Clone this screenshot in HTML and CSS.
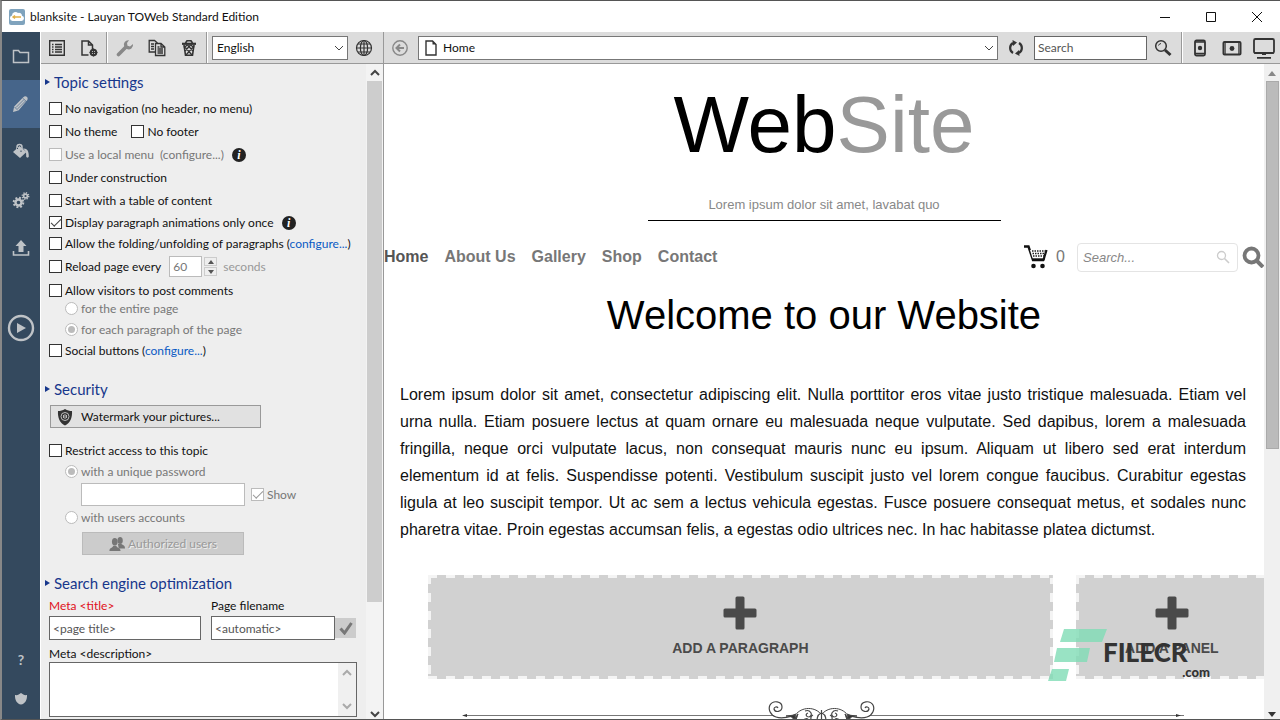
FILE: index.html
```html
<!DOCTYPE html>
<html lang="en">
<head>
  <meta charset="UTF-8">
  <title>blanksite - Lauyan TOWeb Standard Edition</title>
  <meta name="viewport" content="width=device-width, initial-scale=1.0">
  <link rel="stylesheet" href="styles.css">
</head>
<body>

<div class="window">
  <header class="titlebar">
    <svg class="app-icon" viewBox="0 0 16 16">
      <rect width="16" height="16" rx="2" fill="#7fa3bd"/>
      <path d="M3.500 12a2.800 2.800 0 0 1-.5-5.500A3.500 3.500 0 0 1 9 4a3 3 0 0 1 4 2.700A2.700 2.700 0 0 1 12.500 12z" fill="#fff"/>
      <path d="M4 8h8M6 6.500 4 8l2 1.500" stroke="#e0b04a" stroke-width="1.400" fill="none"/>
    </svg>
    <h1 class="title">blanksite - Lauyan TOWeb Standard Edition</h1>
    <button class="win-btn" aria-label="Minimize"><svg viewBox="0 0 12 12"><path d="M1 6.500h10"/></svg></button>
    <button class="win-btn" aria-label="Maximize"><svg viewBox="0 0 12 12"><path d="M1.500 1.500h9v9h-9z"/></svg></button>
    <button class="win-btn" aria-label="Close"><svg viewBox="0 0 12 12"><path d="M1 1l10 10M11 1 1 11"/></svg></button>
  </header>

  <div class="main">
    <nav class="rail">
      <button aria-label="Files"><svg viewBox="0 0 18 18"><path d="M1.500 15.500v-12h5l1.500 2h8.500v10z" fill="none" stroke="currentColor" stroke-width="1.500"/></svg></button>
      <button class="active" aria-label="Edit"><svg viewBox="0 0 18 18"><path d="M1 17l1.200-5.500L11 2.500c1.500-1.500 3-1.500 4-.5s1 2.500-.5 4L6.500 15.500z" fill="currentColor"/><path d="M4 12.500l8-8M5.500 14l8-8M2.500 12l3.500 3.500M10.500 3l4.500 4" stroke="#46658a" stroke-width=".7" fill="none"/></svg></button>
      <button aria-label="Theme"><svg viewBox="0 0 18 18"><path d="M1 9l6.500-6 7 6-6.500 6z" fill="currentColor"/><path d="M5 7V4a2.500 2.500 0 0 1 5 0v4" fill="none" stroke="currentColor" stroke-width="1.500"/><path d="M5.500 6V5M9 7.500v1.500" stroke="#34495e"/><path d="M11 5.500c4-.5 6 2.500 5.800 8-.2 1.500-2.400 1.500-2.600 0 0-3 .3-5-3.200-8z" fill="currentColor"/></svg></button>
      <button aria-label="Options"><svg viewBox="0 0 18 18" fill="none" stroke="currentColor"><circle cx="6.500" cy="11.500" r="3" stroke-width="2.400"/><circle cx="6.500" cy="11.500" r="4.800" stroke-width="2" stroke-dasharray="1.900 1.870"/><circle cx="13.500" cy="5" r="1.900" stroke-width="1.600"/><circle cx="13.500" cy="5" r="3.200" stroke-width="1.500" stroke-dasharray="1.250 1.260"/></svg></button>
      <button aria-label="Publish"><svg viewBox="0 0 18 18"><path d="M9 1l5.500 6H11.500v6h-5V7h-3z" fill="currentColor"/><path d="M1.500 12v4h15v-4" fill="none" stroke="currentColor" stroke-width="1.600"/></svg></button>
      <button class="play" aria-label="Preview"><svg viewBox="0 0 28 28"><circle cx="14" cy="14" r="12" fill="none" stroke="currentColor" stroke-width="2.400"/><path d="M10 9l9 5-9 5z" fill="currentColor"/></svg></button>
      <span class="rail-space"></span>
      <button class="small" aria-label="Help">?</button>
      <button class="small" aria-label="Shop"><svg viewBox="0 0 18 18"><path d="M3 5c2.500.5 4-.5 6-2 2 1.500 3.500 2.500 6 2 .3 5-2 9-6 9.500C5 14 2.700 10 3 5z" fill="currentColor"/></svg></button>
    </nav>

    <section class="panel">
      <div class="toolbar">
        <button class="tool" aria-label="List"><svg viewBox="0 0 18 18" fill="none" stroke="currentColor"><path d="M1.700 1.700h14.600v14.600H1.700z" stroke-width="1.400"/><path d="M4 5.500h1.500M4 8h1.500M4 10.500h1.500M4 13h1.500M7 5.500h7M7 8h7M7 10.500h7M7 13h7" stroke-width="1.300"/></svg></button>
        <button class="tool" aria-label="New page"><svg viewBox="0 0 18 18" fill="none" stroke="currentColor" stroke-width="1.500"><path d="M8.500 16H2V2h6.500l4 4v4M8.500 2v4h4"/><circle cx="13.500" cy="13.500" r="2.800" stroke-width="2"/><path d="M13.500 9.500v8M9.500 13.500h8M13.500 12.500v2" stroke-width="1.200"/></svg></button>
        <span class="sep"></span>
        <button class="tool dim" aria-label="Settings"><svg viewBox="0 0 18 18"><path d="M2.500 15.500l7-7" stroke="currentColor" stroke-width="3.600" stroke-linecap="round"/><path d="M13 1.200a4.500 4.500 0 0 0-4.800 6.300l2.500 2.500a4.500 4.500 0 0 0 6.300-5L14 7.500l-2.500-.8L11 4z" fill="currentColor"/></svg></button>
        <button class="tool" aria-label="Copy"><svg viewBox="0 0 18 18" fill="none" stroke="currentColor" stroke-width="1.300"><path d="M7 13H1.200V1.500h5.300L9.500 4"/><path d="M7.500 4.500h5.500l3.800 3.500v8.500H7.500zM13 4.500V8h3.800M3 5h3M3 7.500h3M3 10h3M9.500 10h5.500M9.500 12h5.500M9.500 14h5.500M9.500 8h2"/></svg></button>
        <button class="tool" aria-label="Delete"><svg viewBox="0 0 18 18" fill="none" stroke="currentColor"><path d="M2 4.800h14" stroke-width="2.200"/><path d="M5.500 4l1.500-2.200h4L12.500 4" stroke-width="1.600"/><path d="M4 6l1.500 10.300h7L14 6" stroke-width="1.600"/><path d="M4 7l8 9M7.500 6l5.500 6M11 6l3 3M14 7l-8 9M10.500 6l-5.500 6M7 6 4 9" stroke-width="1.300"/></svg></button>
        <span class="sep"></span>
        <div class="combo lang">
          <select aria-label="Language"><option>English</option></select>
          <svg class="chev" viewBox="0 0 10 10"><path d="M1 3l4 4 4-4"/></svg>
        </div>
        <button class="tool" aria-label="Languages"><svg viewBox="0 0 18 18" fill="none" stroke="currentColor" stroke-width="1.200"><circle cx="9" cy="9" r="7.500"/><ellipse cx="9" cy="9" rx="3.600" ry="7.500"/><path d="M9 1.500v15M1.500 9h15M3 5h12M3 13h12"/></svg></button>
      </div>

      <div class="panel-body">
        <form class="settings">
          <h2>Topic settings</h2>
          <div class="row"><label><input type="checkbox">No navigation (no header, no menu)</label></div>
          <div class="row"><label><input type="checkbox">No theme</label><label class="second"><input type="checkbox">No footer</label></div>
          <div class="row off"><label><input type="checkbox" disabled>Use a local menu</label><span class="note">(configure...)</span><span class="info">i</span></div>
          <div class="row"><label><input type="checkbox">Under construction</label></div>
          <div class="row"><label><input type="checkbox">Start with a table of content</label></div>
          <div class="row tight"><label><input type="checkbox" checked>Display paragraph animations only once</label><span class="info">i</span></div>
          <div class="row tight"><label><input type="checkbox">Allow the folding/unfolding of paragraphs</label><span class="conf">(<a href="#">configure...</a>)</span></div>
          <div class="row tall">
            <label><input type="checkbox">Reload page every</label>
            <input class="num" type="text" value="60" aria-label="Reload interval" disabled>
            <span class="spin">
              <button type="button" aria-label="Increase" disabled><svg viewBox="0 0 6 4"><path d="M0 4l3-4 3 4z"/></svg></button>
              <button type="button" aria-label="Decrease" disabled><svg viewBox="0 0 6 4"><path d="M0 0l3 4 3-4z"/></svg></button>
            </span>
            <span class="unit">seconds</span>
          </div>
          <div class="row lead"><label><input type="checkbox">Allow visitors to post comments</label></div>
          <div class="row tight sub off"><label><input type="radio" name="comments" disabled>for the entire page</label></div>
          <div class="row tight sub off"><label><input type="radio" name="comments" checked disabled>for each paragraph of the page</label></div>
          <div class="row tight"><label><input type="checkbox">Social buttons</label><span class="conf">(<a href="#">configure...</a>)</span></div>

          <h2>Security</h2>
          <button type="button" class="btn">
            <svg viewBox="0 0 16 18"><path d="M8 1c2.500 1.500 4.500 2 7 2 .5 7-2 12-7 14.500C3 15 .5 10 1 3c2.500 0 4.500-.5 7-2z" fill="#333"/><circle cx="8" cy="8.500" r="4" fill="none" stroke="#bbb"/><path d="M8 6v5M6.500 7v3M9.500 7v3" stroke="#bbb"/></svg>
            Watermark your pictures...
          </button>
          <div class="row tight restrict"><label><input type="checkbox">Restrict access to this topic</label></div>
          <div class="row tight sub off"><label><input type="radio" name="access" checked disabled>with a unique password</label></div>
          <div class="row pass off">
            <input class="box" type="password" aria-label="Password" disabled>
            <label><input type="checkbox" checked disabled>Show</label>
          </div>
          <div class="row tight sub off"><label><input type="radio" name="access" disabled>with users accounts</label></div>
          <button type="button" class="btn users" disabled>
            <svg viewBox="0 0 18 18" fill="#777"><ellipse cx="12.500" cy="5" rx="3" ry="4"/><path d="M10 9l4 0c2 1.500 4 1.500 4 5h-7z"/><ellipse cx="6.500" cy="6.500" rx="3.200" ry="4.300"/><path d="M.5 17c0-4 3-3 4.500-6h3c1.500 3 5 2 5 6z"/></svg>
            Authorized users
          </button>

          <h2>Search engine optimization</h2>
          <div class="fields">
            <div class="field wide"><label class="red" for="mt">Meta &lt;title&gt;</label><input class="box" id="mt" type="text" value="&lt;page title&gt;"></div>
            <div class="field"><label for="pf">Page filename</label>
              <div class="joined"><input class="box" id="pf" type="text" value="&lt;automatic&gt;"><button type="button" aria-label="Apply" disabled><svg viewBox="0 0 14 14"><path d="M1.500 7.500l4 4.500 7-10" fill="none" stroke="#777" stroke-width="3"/></svg></button></div>
            </div>
          </div>
          <div class="field desc"><label for="md">Meta &lt;description&gt;</label>
            <div class="area">
              <textarea id="md"></textarea>
              <div class="area-scroll"><svg class="chev" viewBox="0 0 10 10"><path d="M1 7l4-4 4 4"/></svg><svg class="chev" viewBox="0 0 10 10"><path d="M1 3l4 4 4-4"/></svg></div>
            </div>
          </div>
        </form>
        <div class="scroll">
          <svg class="chev" viewBox="0 0 10 10"><path d="M1 7l4-4 4 4"/></svg>
          <div class="thumb"></div>
          <svg class="chev end" viewBox="0 0 10 10"><path d="M1 3l4 4 4-4"/></svg>
        </div>
      </div>
    </section>

    <section class="preview">
      <div class="toolbar">
        <button class="tool dim back" aria-label="Back"><svg viewBox="0 0 18 18" fill="none" stroke="currentColor"><circle cx="9" cy="9" r="7.200" stroke-width="1.400"/><path d="M13 9H6M9 5.500 5.500 9 9 12.500" stroke-width="2"/></svg></button>
        <div class="combo address">
          <svg class="page" viewBox="0 0 12 16"><path d="M1 1h6.500L11 4.500V15H1z" fill="#fff" stroke="#333" stroke-width="1.400"/><path d="M7.500 1v3.500H11z" fill="#333"/></svg>
          <select aria-label="Page"><option>Home</option></select>
          <svg class="chev" viewBox="0 0 10 10"><path d="M1 3l4 4 4-4"/></svg>
        </div>
        <button class="tool" aria-label="Refresh"><svg viewBox="0 0 18 18" fill="none" stroke="currentColor" stroke-width="2.200"><path d="M6 14A5.800 5.800 0 0 1 6 4M12 4a5.800 5.800 0 0 1 0 10"/><path d="M5.500 1l4.500 2.500L6 7zM12.500 17L8 14.500l4-3.500z" fill="currentColor" stroke="none"/></svg></button>
        <input class="box find" type="text" value="Search" aria-label="Find">
        <button class="tool" aria-label="Search"><svg viewBox="0 0 18 18" fill="none" stroke="currentColor"><circle cx="7" cy="7" r="5.300" stroke-width="1.500"/><path d="M4.500 6.500A3 3 0 0 1 7 4.500" /><path d="M11 11l5.500 5" stroke-width="3"/></svg></button>
        <span class="sep"></span>
        <button class="tool" aria-label="Phone"><svg viewBox="0 0 18 18"><rect x="4" y="1.500" width="10" height="15" rx="1.500" fill="none" stroke="currentColor" stroke-width="1.800"/><path d="M4 3h10M4 14.500h10" stroke="currentColor" stroke-width="1.500"/><circle cx="9" cy="9" r="2.200" fill="currentColor"/></svg></button>
        <button class="tool" aria-label="Tablet"><svg class="w20" viewBox="0 0 20 18"><rect x="1.500" y="3" width="17" height="12.500" rx="1" fill="none" stroke="currentColor" stroke-width="2"/><path d="M3.200 3v12M16.800 3v12" stroke="currentColor"/><circle cx="10" cy="9.500" r="2.400" fill="currentColor"/></svg></button>
        <button class="tool" aria-label="Desktop"><svg class="w22" viewBox="0 0 22 22"><rect x="1" y="2" width="20" height="14" rx="1.500" fill="none" stroke="currentColor" stroke-width="1.800"/><path d="M1 15.800h20M4 20.800h14" stroke="currentColor" stroke-width="1.800"/><path d="M9 16h4v2H9z" fill="currentColor"/></svg></button>
      </div>

      <div class="preview-body">
        <div class="site">
          <header class="brand">
            <div class="logo">Web<span>Site</span></div>
            <p>Lorem ipsum dolor sit amet, lavabat quo</p>
          </header>
          <nav class="menu">
            <a class="current" href="#">Home</a>
            <a href="#">About Us</a>
            <a href="#">Gallery</a>
            <a href="#">Shop</a>
            <a href="#">Contact</a>
            <div class="shop">
              <svg class="cart" viewBox="0 0 24 24"><path d="M0 1.500h4.500L9 15h11" fill="none" stroke="#111" stroke-width="2.400"/><path d="M6 5h17l-3 9.500H9z" fill="#fff"/><path d="M22.500 5l-3 10" stroke="#111" stroke-width="2.200"/><path d="M8 6h14M8.500 8.500h13M9 11h12" stroke="#222" stroke-width="1.400" stroke-dasharray="1.500 1"/><path d="M8 14.500h12.500" stroke="#111" stroke-width="2.400"/><circle cx="9.500" cy="21" r="2.300" fill="#111"/><circle cx="18.500" cy="21" r="2.300" fill="#111"/></svg>
              <span class="count">0</span>
              <div class="site-search">
                <input type="text" placeholder="Search..." aria-label="Search the site">
                <svg viewBox="0 0 14 14"><circle cx="5.500" cy="5.500" r="4" fill="none" stroke="#ccc" stroke-width="1.300"/><path d="M8.500 8.500l4.500 4.500" stroke="#ccc" stroke-width="1.600"/></svg>
              </div>
              <svg class="lens" viewBox="0 0 22 22"><circle cx="9.500" cy="9.500" r="7" fill="none" stroke="#777" stroke-width="3.800"/><path d="M14 14l7 7" stroke="#777" stroke-width="4"/></svg>
            </div>
          </nav>
          <h2 class="welcome">Welcome to our Website</h2>
          <p class="copy">Lorem ipsum dolor sit amet, consectetur adipiscing elit. Nulla porttitor eros vitae justo tristique malesuada. Etiam vel urna nulla. Etiam posuere lectus at quam ornare eu malesuada neque vulputate. Sed dapibus, lorem a malesuada fringilla, neque orci vulputate lacus, non consequat mauris nunc eu ipsum. Aliquam ut libero sed erat interdum elementum id at felis. Suspendisse potenti. Vestibulum suscipit justo vel lorem congue faucibus. Curabitur egestas ligula at leo suscipit tempor. Ut ac sem a lectus vehicula egestas. Fusce posuere consequat metus, et sodales nunc pharetra vitae. Proin egestas accumsan felis, a egestas odio ultrices nec. In hac habitasse platea dictumst.</p>
          <div class="adders">
            <button class="add"><svg viewBox="0 0 34 34"><path d="M12.500 2q0-1.500 1.500-1.500h6q1.500 0 1.500 1.500v10.500h10.500q1.500 0 1.500 1.500v6q0 1.500-1.500 1.500H21.500v10.500q0 1.500-1.500 1.500h-6q-1.500 0-1.500-1.500V21.500H2Q.5 21.500.5 20v-6q0-1.500 1.500-1.500h10.500z"/></svg>ADD A PARAGRAPH</button>
            <button class="add"><svg viewBox="0 0 34 34"><path d="M12.500 2q0-1.500 1.500-1.500h6q1.500 0 1.500 1.500v10.500h10.500q1.500 0 1.500 1.500v6q0 1.500-1.500 1.500H21.500v10.500q0 1.500-1.500 1.500h-6q-1.500 0-1.500-1.500V21.500H2Q.5 21.500.5 20v-6q0-1.500 1.500-1.500h10.500z"/></svg>ADD A PANEL</button>
          </div>
          <svg class="ornament" viewBox="0 0 724 36" fill="none" stroke="#444">
            <path d="M2 14.500h310M407 14.500h315" stroke="#777"/>
            <path d="M0 14.500l5-1.500v3zM719 14.500l-5-1.500v3z" fill="#333" stroke="none"/>
            <g id="half">
              <path d="M334 13c-5 3-14 5-20 3-6-2-8-8-6-12 3-5 12-4 12 2 0 5-7 6-8 2 0-2 3-3 4-1" stroke-width="1.200"/>
              <path d="M324 15c5 0 7 1 10 7l-1-8zM336 13l-3 9h-4z" fill="#333"/>
              <path d="M333 15c4-8 18-11 26-2" />
              <path d="M343 10c5-2 9 4 4 6-3 0-4-3-1-4M354 22c-5-1-7-6-3-8M357 22c-3-3-2-8 2-10M341 22c0-5 6-6 6-1" stroke-width="1.200"/>
            </g>
            <use href="#half" transform="matrix(-1 0 0 1 719 0)"/>
            <path d="M359.500 9v14" stroke-width="1.200"/>
          </svg>
        </div>
        <div class="site-scroll">
          <svg viewBox="0 0 8 5"><path d="M0 5l4-5 4 5z" fill="#888"/></svg>
          <div class="thumb"></div>
          <svg class="end" viewBox="0 0 8 5"><path d="M0 0l4 5 4-5z" fill="#333"/></svg>
        </div>
      </div>
    </section>
  </div>

  <div class="watermark">
    <svg viewBox="0 0 60 52" fill="#7fdcb5" fill-opacity=".8"><path d="M16 0h43l-5 13H12zM9 19h33l-3 14H6zM4 40h17l-3 12H0z"/></svg>
    <div class="mark">FILECR<span>.com</span></div>
  </div>
</div>

</body>
</html>
```
FILE: styles.css
```css
* {
  box-sizing: border-box;
}

html, body {
  margin: 0;
  height: 100%;
  overflow: hidden;
}

body, button, input, select, textarea {
  font-family: Lato, "Open Sans", sans-serif;
  font-size: 12px;
  color: #111;
}

button {
  border: 0;
  padding: 0;
  background: none;
}

svg {
  display: block;
  flex: none;
}

.window {
  position: relative;
  display: flex;
  flex-direction: column;
  height: 100vh;
  border: 1px solid #555;
  border-left: 2px solid #888;
  border-right: 0;
  background: #fff;
}

.titlebar {
  display: flex;
  align-items: center;
  height: 31px;
  flex: none;
  padding-left: 7px;
}

.app-icon {
  width: 16px;
  height: 16px;
}

.title {
  flex: 1;
  margin: 0 0 0 5px;
  font-size: 12px;
  font-weight: normal;
}

.win-btn {
  display: grid;
  place-items: center;
  width: 46px;
  height: 30px;
}

.win-btn svg {
  width: 12px;
  height: 12px;
  fill: none;
  stroke: #111;
}

.main {
  display: flex;
  flex: 1;
  min-height: 0;
}

/* left rail */
.rail {
  display: flex;
  flex-direction: column;
  width: 38px;
  flex: none;
  background: #34495e;
}

.rail button {
  display: grid;
  place-items: center;
  height: 48px;
  flex: none;
  color: #bfc3c7;
}

.rail button.active {
  background: #46658a;
}

.rail svg {
  width: 18px;
  height: 18px;
}

.rail .play {
  margin-top: 32px;
}

.rail .play svg {
  width: 28px;
  height: 28px;
}

.rail-space {
  flex: 1;
}

.rail button.small {
  height: 40px;
  font-size: 14px;
  font-weight: bold;
}

/* toolbars */
.toolbar {
  display: flex;
  align-items: center;
  height: 32px;
  flex: none;
  border-bottom: 1px solid #999;
  background: #dcdcdc;
}

.tool {
  display: grid;
  place-items: center;
  width: 32px;
  height: 31px;
  flex: none;
  color: #333;
}

.tool svg {
  width: 18px;
  height: 18px;
}

.tool svg.w20 {
  width: 20px;
}

.tool svg.w22 {
  width: 22px;
  height: 22px;
}

.tool.dim {
  color: #888;
}

.sep {
  width: 2px;
  height: 31px;
  margin: 0 1px;
  border-left: 1px solid #999;
  background: #fff;
}

.combo {
  display: flex;
  align-items: center;
  height: 24px;
  border: 1px solid #777;
  background: #fff;
  padding-right: 3px;
}

.combo select {
  flex: 1;
  min-width: 0;
  height: 22px;
  border: 0;
  padding: 0 4px;
  background: none;
  appearance: none;
}

.chev {
  width: 10px;
  height: 10px;
  fill: none;
  stroke: #444;
}

.lang {
  width: 136px;
  margin-left: 3px;
}

.address {
  flex: 1;
  padding-left: 6px;
}

.address .page {
  width: 12px;
  height: 16px;
  margin-right: 2px;
}

.box {
  height: 24px;
  border: 1px solid #666;
  border-radius: 0;
  padding: 0 3px;
  background: #fff;
  color: #555;
}

.find {
  width: 113px;
  margin-left: 2px;
}

.find + .tool + .sep {
  margin-left: 2px;
}

/* settings panel */
.panel {
  display: flex;
  flex-direction: column;
  width: 344px;
  flex: none;
  border-left: 1px solid #fff;
  border-right: 1px solid #999;
}

.panel-body {
  display: flex;
  flex: 1;
  min-height: 0;
  background: #eee;
}

.settings {
  flex: 1;
  min-width: 0;
  overflow: hidden;
  padding: 6px 0 0 8px;
  white-space: nowrap;
}

.settings h2 {
  display: flex;
  align-items: center;
  height: 24px;
  margin: 16px 0 3px -4px;
  font-size: 15px;
  font-weight: normal;
  color: #17378c;
}

.settings h2:first-child {
  margin-top: 0;
}

.settings h2::before {
  content: "";
  margin-right: 4px;
  border: 3px solid transparent;
  border-left: 5px solid #17378c;
  border-right: 0;
}

.row {
  display: flex;
  align-items: center;
  height: 23px;
}

.row.tight {
  height: 21px;
}

.row.tall {
  height: 25px;
}

.row.lead {
  height: 15px;
  margin-top: 4px;
}

.row.sub {
  padding-left: 16px;
}

.row label {
  display: flex;
  align-items: center;
  gap: 3px;
}

.row .second {
  margin-left: 14px;
}

.off {
  color: #777;
}

.row .note {
  margin-left: 6px;
}

.conf {
  margin-left: 3px;
}

a {
  color: #0a5bc4;
  text-decoration: none;
}

input[type="checkbox"],
input[type="radio"] {
  appearance: none;
  display: grid;
  place-items: center;
  width: 13px;
  height: 13px;
  flex: none;
  margin: 0;
  border: 1px solid #333;
  background: #fff;
}

input[type="radio"] {
  border-radius: 50%;
}

input[type]:disabled {
  border-color: #bbb;
}

input[type="checkbox"]:checked::after {
  content: "";
  width: 9px;
  height: 4px;
  margin-bottom: 3px;
  border: solid #444;
  border-width: 0 0 1px 1px;
  transform: rotate(-45deg);
}

input[type="checkbox"]:checked:disabled::after {
  border-color: #999;
}

input[type="radio"]:checked::after {
  content: "";
  width: 7px;
  height: 7px;
  border-radius: 50%;
  background: #bbb;
}

.info {
  width: 14px;
  height: 14px;
  margin-left: 8px;
  border-radius: 50%;
  background: #222;
  color: #fff;
  font: italic bold 12px/14px "Liberation Serif", serif;
  text-align: center;
}

.num {
  width: 33px;
  height: 21px;
  margin-left: 8px;
  border: 1px solid #bbb;
  padding: 0 3px;
  background: #fff;
  color: #777;
}

.spin {
  display: grid;
  gap: 1px;
  margin-left: 2px;
}

.spin button {
  display: grid;
  place-items: center;
  width: 13px;
  height: 9px;
  border: 1px solid #ccc;
}

.spin svg {
  width: 6px;
  height: 4px;
  fill: #555;
}

.unit {
  margin-left: 6px;
  color: #999;
}

.btn {
  display: flex;
  align-items: center;
  gap: 8px;
  width: 211px;
  height: 23px;
  margin: 4px 0 0 1px;
  border: 1px solid #999;
  padding-left: 6px;
  background: #e1e1e1;
}

.btn svg {
  width: 16px;
  height: 18px;
}

.restrict {
  margin-top: 12px;
}

.row.pass {
  height: 25px;
  padding-left: 32px;
}

.pass .box {
  width: 164px;
  height: 23px;
  margin-right: 6px;
}

.btn.users {
  justify-content: center;
  gap: 3px;
  width: 162px;
  margin-left: 33px;
  border-color: #bbb;
  padding: 0;
  background: #ccc;
  color: #999;
  text-shadow: 1px 1px #eee;
}

.fields {
  display: flex;
  gap: 10px;
}

.field {
  display: flex;
  flex-direction: column;
  gap: 2px;
}

.field label {
  line-height: 16px;
}

.field .box {
  width: 124px;
}

.field.wide .box {
  width: 152px;
}

.red {
  color: #e01020;
}

.joined {
  display: flex;
}

.joined button {
  display: grid;
  place-items: center;
  width: 21px;
  height: 20px;
  align-self: center;
  background: #ccc;
}

.joined svg {
  width: 14px;
  height: 14px;
}

.desc {
  gap: 0;
  margin-top: 6px;
}

.area {
  display: flex;
  width: 308px;
  height: 55px;
  border: 1px solid #666;
  background: #fff;
}

.area textarea {
  flex: 1;
  border: 0;
  outline: 0;
  background: none;
  resize: none;
}

.area-scroll {
  display: flex;
  flex-direction: column;
  justify-content: space-between;
  align-items: center;
  width: 18px;
  padding: 5px 0;
  background: #f0f0f0;
}

.area-scroll .chev {
  stroke: #aaa;
  stroke-width: 2px;
}

.scroll {
  display: flex;
  flex-direction: column;
  align-items: center;
  width: 17px;
  flex: none;
  padding: 4px 0 0;
  background: #f3f3f3;
}

.scroll .chev {
  stroke-width: 2px;
}

.scroll .thumb {
  width: 15px;
  height: 80%;
  margin-top: 3px;
  background: #cdcdcd;
}

.end {
  margin-top: auto;
}

/* page preview */
.preview {
  display: flex;
  flex-direction: column;
  flex: 1;
  min-width: 0;
}

.back {
  margin-right: 2px;
}

.address + .tool {
  margin-left: 2px;
}

.preview-body {
  display: flex;
  flex: 1;
  min-height: 0;
}

.site {
  display: flex;
  flex-direction: column;
  flex: 1;
  min-width: 0;
  overflow: hidden;
  background: #fff;
  font-family: "Liberation Sans", Arial, sans-serif;
}

.brand {
  align-self: center;
  width: 353px;
  flex: none;
  margin-top: 15px;
  border-bottom: 1px solid #000;
  text-align: center;
}

.logo {
  font-size: 80px;
  line-height: 92px;
  color: #000;
}

.logo span {
  color: #999;
}

.brand p {
  margin: 26px 0 7px;
  font-size: 13px;
  line-height: 16px;
  color: #888;
}

.menu {
  display: flex;
  align-items: center;
  gap: 16px;
  height: 30px;
  flex: none;
  margin-top: 21px;
}

.menu a {
  font-size: 16px;
  font-weight: bold;
  color: #777;
}

.menu a.current {
  color: #555;
}

.shop {
  display: flex;
  align-items: center;
  margin-left: auto;
}

.cart {
  width: 24px;
  height: 24px;
}

.count {
  margin: 0 12px 0 8px;
  font-size: 16px;
  color: #777;
}

.site-search {
  display: flex;
  align-items: center;
  width: 161px;
  height: 29px;
  margin-right: 4px;
  border: 1px solid #e4e4e4;
  border-radius: 4px;
  padding: 0 7px 0 5px;
}

.site-search input {
  flex: 1;
  min-width: 0;
  border: 0;
  padding: 0;
  font: italic 13px "Liberation Sans", Arial, sans-serif;
}

.site-search input::placeholder {
  color: #888;
}

.site-search svg {
  width: 14px;
  height: 14px;
}

.lens {
  width: 22px;
  height: 22px;
}

.welcome {
  margin: 20px 0 0;
  font-size: 40px;
  font-weight: normal;
  line-height: 46px;
  text-align: center;
  color: #000;
}

.copy {
  margin: 43px 18px 0 16px;
  font-size: 16px;
  line-height: 27px;
  text-align: justify;
}

.adders {
  display: grid;
  grid-template-columns: 13fr 4fr;
  gap: 23px;
  flex: none;
  margin: 32px -4px 0 44px;
}

/* light dashes along all four edges */
.add {
  display: flex;
  flex-direction: column;
  align-items: center;
  gap: 10px;
  height: 104px;
  padding-top: 21px;
  background:
    repeating-linear-gradient(90deg, #f4f4f4 0 9px, #d1d1d1 9px 18px) top / 100% 3px no-repeat,
    repeating-linear-gradient(90deg, #f4f4f4 0 9px, #d1d1d1 9px 18px) bottom / 100% 3px no-repeat,
    repeating-linear-gradient(#f4f4f4 0 9px, #d1d1d1 9px 18px) left / 3px 100% no-repeat,
    repeating-linear-gradient(#f4f4f4 0 9px, #d1d1d1 9px 18px) right / 3px 100% no-repeat,
    #d1d1d1;
  font: bold 14px/16px "Liberation Sans", Arial, sans-serif;
  color: #4a4a4a;
}

.add svg {
  width: 34px;
  height: 34px;
  fill: #4a4a4a;
}

.ornament {
  align-self: center;
  width: 724px;
  height: 36px;
  margin-top: 22px;
}

.site-scroll {
  display: flex;
  flex-direction: column;
  align-items: center;
  width: 16px;
  flex: none;
  padding: 7px 0 2px;
  background: #f0f0f0;
}

.site-scroll svg {
  width: 8px;
  height: 5px;
}

.site-scroll .thumb {
  width: 13px;
  height: 57%;
  margin-top: 5px;
  border: 1px solid #aaa;
  background: #bbb;
}

/* overlay mark */
.watermark {
  position: absolute;
  right: 70px;
  bottom: 38px;
  display: flex;
  align-items: center;
  pointer-events: none;
}

.watermark svg {
  width: 60px;
  height: 52px;
}

.mark {
  display: flex;
  flex-direction: column;
  width: 107px;
  margin: 8px 0 0 -5px;
  font: 900 26px/26px Lato, sans-serif;
  color: #333;
}

.mark span {
  align-self: flex-end;
  font-size: 13px;
  line-height: 14px;
}
```
